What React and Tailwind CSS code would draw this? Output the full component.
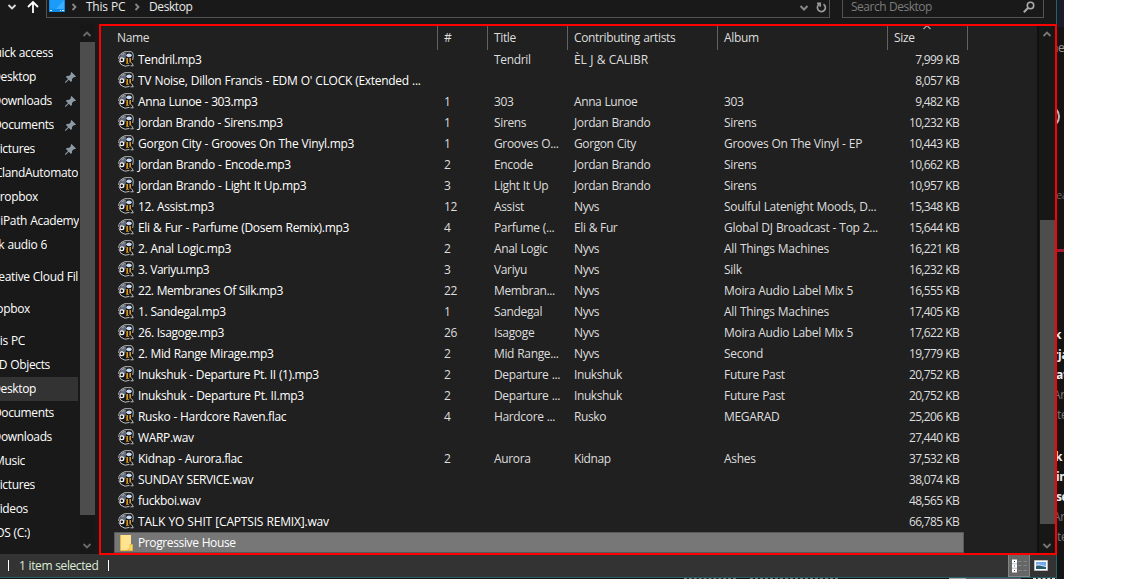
import React from "react";

const files = [
  ["Tendril.mp3", "", "Tendril", "ÈL J & CALIBR", "", "7,999"],
  ["TV Noise, Dillon Francis - EDM O' CLOCK (Extended ...", "", "", "", "", "8,057"],
  ["Anna Lunoe - 303.mp3", "1", "303", "Anna Lunoe", "303", "9,482"],
  ["Jordan Brando - Sirens.mp3", "1", "Sirens", "Jordan Brando", "Sirens", "10,232"],
  ["Gorgon City - Grooves On The Vinyl.mp3", "1", "Grooves O...", "Gorgon City", "Grooves On The Vinyl - EP", "10,443"],
  ["Jordan Brando - Encode.mp3", "2", "Encode", "Jordan Brando", "Sirens", "10,662"],
  ["Jordan Brando - Light It Up.mp3", "3", "Light It Up", "Jordan Brando", "Sirens", "10,957"],
  ["12. Assist.mp3", "12", "Assist", "Nyvs", "Soulful Latenight Moods, D...", "15,348"],
  ["Eli & Fur - Parfume (Dosem Remix).mp3", "4", "Parfume (...", "Eli & Fur", "Global DJ Broadcast - Top 2...", "15,644"],
  ["2. Anal Logic.mp3", "2", "Anal Logic", "Nyvs", "All Things Machines", "16,221"],
  ["3. Variyu.mp3", "3", "Variyu", "Nyvs", "Silk", "16,232"],
  ["22. Membranes Of Silk.mp3", "22", "Membran...", "Nyvs", "Moira Audio Label Mix 5", "16,555"],
  ["1. Sandegal.mp3", "1", "Sandegal", "Nyvs", "All Things Machines", "17,405"],
  ["26. Isagoge.mp3", "26", "Isagoge", "Nyvs", "Moira Audio Label Mix 5", "17,622"],
  ["2. Mid Range Mirage.mp3", "2", "Mid Range...", "Nyvs", "Second", "19,779"],
  ["Inukshuk - Departure Pt. II (1).mp3", "2", "Departure ...", "Inukshuk", "Future Past", "20,752"],
  ["Inukshuk - Departure Pt. II.mp3", "2", "Departure ...", "Inukshuk", "Future Past", "20,752"],
  ["Rusko - Hardcore Raven.flac", "4", "Hardcore ...", "Rusko", "MEGARAD", "25,206"],
  ["WARP.wav", "", "", "", "", "27,440"],
  ["Kidnap - Aurora.flac", "2", "Aurora", "Kidnap", "Ashes", "37,532"],
  ["SUNDAY SERVICE.wav", "", "", "", "", "38,074"],
  ["fuckboi.wav", "", "", "", "", "48,565"],
  ["TALK YO SHIT [CAPTSIS REMIX].wav", "", "", "", "", "66,785"],
];

const nameTracking = {
  1: "tracking-[-0.29px]",
  2: "tracking-[-0.4px]",
  3: "tracking-[-0.4px]",
  4: "tracking-[-0.28px]",
  8: "tracking-[-0.31px]",
  10: "tracking-[-0.45px]",
  11: "tracking-[-0.43px]",
  13: "tracking-[-0.38px]",
  15: "tracking-[-0.38px]",
  22: "tracking-[-0.19px]",
};

// label, width up to the right edge of the label, extras
const places = [
  ["Quick access", "w-[53px]"],
  ["Desktop", "w-[36px]", "pin"],
  ["Downloads", "w-[52px]", "pin"],
  ["Documents", "w-[54px]", "pin"],
  ["Pictures", "w-[35px]", "pin"],
  ["ClandAutomato", "w-[78px]"],
  ["Dropbox", "w-[38px]"],
  ["UiPath Academy", "w-[79px]"],
  ["k audio 6", "w-[47px]"],
  ["Creative Cloud Fil", "w-[78px]", "gap"],
  ["Dropbox", "w-[30px]", "gap"],
  ["This PC", "w-[25px]", "gap"],
  ["3D Objects", "w-[50px]"],
  ["Desktop", "w-[36px]", "active"],
  ["Documents", "w-[54px]"],
  ["Downloads", "w-[52px]"],
  ["Music", "w-[25px]"],
  ["Pictures", "w-[35px]"],
  ["Videos", "w-[28px]"],
  ["OS (C:)", "w-[30px]"],
];

const Chevron = ({ d, className = "", color = "#888", w = 1.8 }) => (
  <svg className={`shrink-0 ${className}`} width="10" height="10" viewBox="0 0 10 10" fill="none" stroke={color} strokeWidth={w}>
    <path d={d} />
  </svg>
);
const UP = "M1.5 7 5 3.5 8.5 7";
const DOWN = "M1.5 3 5 6.5 8.5 3";
const RIGHT = "M3.5 2 6.5 5 3.5 8";

const Bee = () => (
  <svg className="mb-px mr-1 shrink-0" width="16" height="16" viewBox="0 0 16 16">
    <path d="M6.500.6h6.700Q15.500 1 15.300 4v4l-.6 4 .8 3h-3l-1-.8Q8 15.800 4.500 14.200.5 11.500.5 7.500.8 2.800 6.500.6z" fill="#15161b" />
    <path d="M1.500 6.500Q2 3.500 5 2L8.300 1.500 7.500 8H4z" fill="#646b78" />
    <path d="M3.500 4 6.500 2.300" stroke="#9aa3b0" strokeWidth="1.300" />
    <path d="M9.200 7v5M12.200 7v4.500" stroke="#d69a1e" strokeWidth="1.600" />
    <path d="M8 12.500h3" stroke="#a87513" strokeWidth="1" />
    <ellipse cx="11" cy="4.300" rx="2.700" ry="1.900" fill="#c9dcf2" />
    <circle cx="3.900" cy="8.700" r="2.500" fill="#f4f4f4" />
    <circle cx="3.800" cy="8.700" r="1.200" fill="#050505" />
    <path d="M.8 9.500Q2 14.300 7 15.200l4.500-.8M13.500 11.500 15.300 14.800H12.500M7 .7h6Q15.200 1 15.300 4.500l-.6 4.500M.7 8Q.6 2.500 7 .7" stroke="#bcbcbc" strokeWidth="1" fill="none" />
  </svg>
);

const Folder = () => (
  <svg className="mr-1 shrink-0" width="16" height="18" viewBox="0 0 16 18">
    <path d="M2 1h11v15H2z" fill="#ffe391" />
    <path d="M2.500 1v15.500H10V15" fill="none" stroke="#e6b93f" />
    <path d="M12 10.500h2.500v6H10.500V15H12z" fill="#ffd964" stroke="#e6b93f" strokeWidth=".8" />
  </svg>
);

const Pin = () => (
  <svg className="ml-auto mr-[2px] shrink-0" width="11" height="11" viewBox="0 0 11 11" fill="#8e9aa3">
    <path d="m6.500 0 4.500 4.500-1.200.8-.8-.3-2 2 .1 1.800-1.200 1.100L3.800 7.800.8 10.800H0V10l3-3L.9 4.900l1.200-1.200 1.900.2 2-2-.4-.9z" />
  </svg>
);

function AddressBar() {
  return (
    <div className="flex h-6 shrink-0 items-start bg-[#191919] text-[#e8e8e8]">
      <Chevron d={DOWN} color="#ddd" className="ml-[7px] mt-[2px]" />
      <svg className="ml-[10px] shrink-0" width="12" height="14" viewBox="0 0 12 14" fill="none" stroke="#fff" strokeWidth="1.800">
        <path d="M6 13V2M1 7l5-5 5 5" />
      </svg>
      <div className="ml-[7px] flex h-[18px] w-[784px] border-x border-b border-[#535353]">
        <svg className="ml-[2px] shrink-0" width="16" height="13" viewBox="0 0 16 13">
          <path d="M0 0h16v12H0z" fill="#0c8be8" />
          <path d="M1 0h14v9H1z" fill="#1a9cf8" />
          <path d="M7 9 15 0v9z" fill="#3aaeff" />
          <path d="M1 10.500h2M11 10.500h1m1 0h2" stroke="#d8efff" />
        </svg>
        <Chevron d={RIGHT} className="ml-1 mt-[2px]" />
        <span className="ml-[7px] w-[40px] shrink-0 whitespace-nowrap leading-[14px] tracking-[-0.25px]">This PC</span>
        <Chevron d={RIGHT} className="ml-[6px] mt-[2px]" />
        <span className="ml-[7px] leading-[14px] tracking-[-0.4px]">Desktop</span>
        <Chevron d={DOWN} className="ml-auto mt-[3px]" w={2} />
        <svg className="ml-[7px] mr-[2px] mt-[2px] shrink-0" width="11" height="12" viewBox="0 0 11 12" fill="none" stroke="#999" strokeWidth="1.700">
          <path d="M7.500 2.200A4 4 0 1 1 3 2.400M1 1.300h3.200v3.500" />
        </svg>
      </div>
      <div className="ml-3 flex h-[18px] w-[202px] border-x border-b border-[#535353] text-[#7c7c7c]">
        <span className="ml-2 whitespace-nowrap leading-[14px] tracking-[-0.5px]">Search Desktop</span>
        <svg className="ml-auto mr-[8px] mt-[1px] shrink-0" width="12" height="12" viewBox="0 0 12 12" fill="none" stroke="#aaa" strokeWidth="1.600">
          <circle cx="7.500" cy="4.500" r="3.200" />
          <path d="M5 7 .8 11.200" strokeWidth="2" />
        </svg>
      </div>
    </div>
  );
}

function Sidebar() {
  return (
    <div className="flex w-[99px] shrink-0 bg-[#191919]">
      <div className="w-[80px] overflow-hidden pt-[17px] text-white">
        {places.map(([label, width, kind], i) => (
          <div
            key={i}
            className={`flex h-6 w-[78px] items-center ${kind === "gap" ? "mt-2" : ""} ${kind === "active" ? "bg-[#333]" : ""}`}
          >
            <div className={`flex shrink-0 justify-end overflow-hidden whitespace-nowrap ${width}`}>
              <span className="shrink-0">{label}</span>
            </div>
            {kind === "pin" && <Pin />}
          </div>
        ))}
      </div>
      <div className="flex w-[15px] flex-col bg-[#171717]">
        <Chevron d={UP} className="mb-[3px] ml-[2px] mt-[5px]" color="#6a6a6a" />
        <div className="h-[473px] w-full bg-[#4d4d4d]" />
        <Chevron d={DOWN} className="ml-[2px] mt-[26px]" color="#6a6a6a" />
      </div>
    </div>
  );
}

function Header() {
  const cell = "h-full border-r border-[#636363] pl-[6px] leading-6";
  return (
    <div className="relative flex h-[24px] text-[#dedede]">
      <div className="h-full w-[339px] border-r border-[#636363] pl-[18px] leading-6">Name</div>
      <div className={`${cell} w-[50px]`}>#</div>
      <div className={`${cell} w-[80px]`}>Title</div>
      <div className={`${cell} w-[150px]`}>Contributing artists</div>
      <div className={`${cell} w-[170px]`}>Album</div>
      <div className={`${cell} w-[80px]`}>Size</div>
      <Chevron d={UP} color="#aaa" w={1.2} className="absolute left-[823px] -top-[4px]" />
    </div>
  );
}

function FileList() {
  return (
    <div className="flex w-[938px] shrink-0 flex-col bg-[#202020] pt-[2px]">
      <Header />
      <div className="-mt-[1px]">
        {files.map(([name, num, title, artist, album, size], i) => (
          <div key={i} className="flex h-[21px] items-center whitespace-nowrap text-[#dedede]">
            <div className="ml-[19px] flex w-[326px] items-center text-white">
              <Bee />
              <span className={nameTracking[i]}>{name}</span>
            </div>
            <span className="w-[50px]">{num}</span>
            <span className="w-[80px]">{title}</span>
            <span className={`w-[150px] ${i === 0 ? "tracking-[-0.1px]" : "tracking-[-0.4px]"}`}>{artist}</span>
            <span className="w-[153px] tracking-[-0.31px]">{album}</span>
            <span className="w-[82px] text-right tracking-[-0.67px]">{size} KB</span>
          </div>
        ))}
        <div className="ml-[15px] flex h-[21px] w-[850px] items-center border border-[#5a5a5a] bg-[#777] pl-[3px] text-white">
          <Folder />
          <span className="tracking-[-0.38px]">Progressive House</span>
        </div>
      </div>
    </div>
  );
}

function StatusBar() {
  return (
    <div className="flex h-[24px] shrink-0 items-center border-b border-[#24626a] bg-[#333] text-[#dcebd8]">
      <div className="ml-2 h-[11px] w-px bg-white" />
      <span className="ml-[10px] w-[89px] tracking-[-0.4px]">1 item selected</span>
      <div className="h-[11px] w-px bg-white" />
      <div className="ml-auto flex h-full w-[22px] items-center justify-center border border-[#858585] bg-[#666]">
        <svg width="18" height="14" viewBox="0 0 18 14">
          <path d="M2 .5h5v13H2z" fill="#fff" />
          <path d="M4 2h1v1H4z" fill="#333" />
          <path d="M4 6.500h1v1H4z" fill="#2579c9" />
          <path d="M4 11h1v1H4z" fill="#a22" />
          <path d="M2 4.800h5M2 9.200h5" stroke="#bbb" />
          <path d="M8 2.500h3.500m2 0H17M8 6.500h3.500m2 0H17M8 11.500h3.500m2 0H17" stroke="#858585" />
        </svg>
      </div>
      <svg className="mx-1 shrink-0" width="14" height="11" viewBox="0 0 14 11">
        <path d="M.5.5h13v10H.5z" fill="#fff" stroke="#bbb" />
        <path d="M2 2h10v7H2z" fill="#73a9ec" />
        <path d="M2 5c3-2 4 0 10 1v1H2z" fill="#dcecf5" />
        <path d="M2 6c3-1 5 0 10 1v2H2z" fill="#275b71" />
      </svg>
      <div className="w-1" />
    </div>
  );
}

function BottomEdge() {
  return (
    <div className="flex h-px">
      <div className="ml-[684px] h-px w-[52px] border-t border-dashed border-[#777]" />
      <div className="ml-[14px] h-px w-[88px] border-t border-dashed border-[#777]" />
      <div className="ml-[111px] h-px w-[17px] bg-[#aaa]" />
      <div className="h-px w-[55px] bg-[#6d5568]" />
      <div className="ml-[12px] h-px w-[22px] border-t border-dashed border-[#ddd]" />
    </div>
  );
}

const behind = [
  ["k", "font-bold text-[#eee]", "mt-[268px] -ml-[3px]"],
  ["rja", "font-bold text-[#eee]", "-ml-[4px]"],
  ["at", "font-bold text-[#eee]", "-ml-px"],
  ["An", "text-[#777]", "-ml-[4px]"],
  ["te", "text-[#777]", ""],
  ["k", "font-bold text-[#eee]", "mt-[22px] -ml-[2px]"],
  ["in", "font-bold text-[#eee]", "-ml-px"],
  ["se", "font-bold text-[#eee]", "-ml-px"],
  ["An", "text-[#777]", "-ml-[4px]"],
  ["te", "text-[#777]", ""],
];

function PageBehind() {
  return (
    <div className="relative flex h-full w-[7px] shrink-0 flex-col overflow-hidden bg-[#141414]">
      <div className="absolute left-0 top-0 h-[27px] w-[7px] bg-[#1b1c2a]" />
      <div className="absolute -left-[6px] top-[38px] leading-5 text-[#999]">ne</div>
      <div className="absolute -left-[20px] top-[105px] h-[23px] w-[23px] rounded-full border-2 border-[#bbb]" />
      <div className="absolute -left-px top-[187px] text-[11px] leading-4 text-[#666]">ea</div>
      <div className="absolute left-0 top-[249px] h-[3px] w-[7px] bg-[#a01c30]" />
      <div className="mt-[57px]" />
      {behind.map(([t, tone, gap], i) => (
        <div key={i} className={`h-5 shrink-0 leading-5 ${tone} ${gap}`}>{t}</div>
      ))}
    </div>
  );
}

export default function App() {
  return (
    <div className="relative flex h-[579px] w-[1132px] overflow-hidden bg-white font-['Open_Sans','Noto_Sans',sans-serif] text-[12px] leading-4 tracking-[-0.35px] [word-spacing:0.4px]">
      <div className="flex w-[1057px] shrink-0 flex-col border-r border-[#24626a] bg-[#111]">
        <AddressBar />
        <div className="flex h-[530px] shrink-0">
          <Sidebar />
          <FileList />
          <div className="ml-[2px] flex w-[17px] shrink-0 flex-col bg-[#171717] pl-px">
            <Chevron d={UP} className="ml-[2px] mt-[5px]" color="#777" />
            <div className="mt-[181px] h-[304px] w-full bg-[#4d4d4d]" />
            <Chevron d={DOWN} className="ml-[2px] mt-[17px]" color="#777" />
          </div>
        </div>
        <StatusBar />
        <BottomEdge />
      </div>
      <PageBehind />
      <div className="pointer-events-none absolute left-[99px] top-[24px] h-[531px] w-[958px] border-2 border-[#ff0000]" />
    </div>
  );
}
